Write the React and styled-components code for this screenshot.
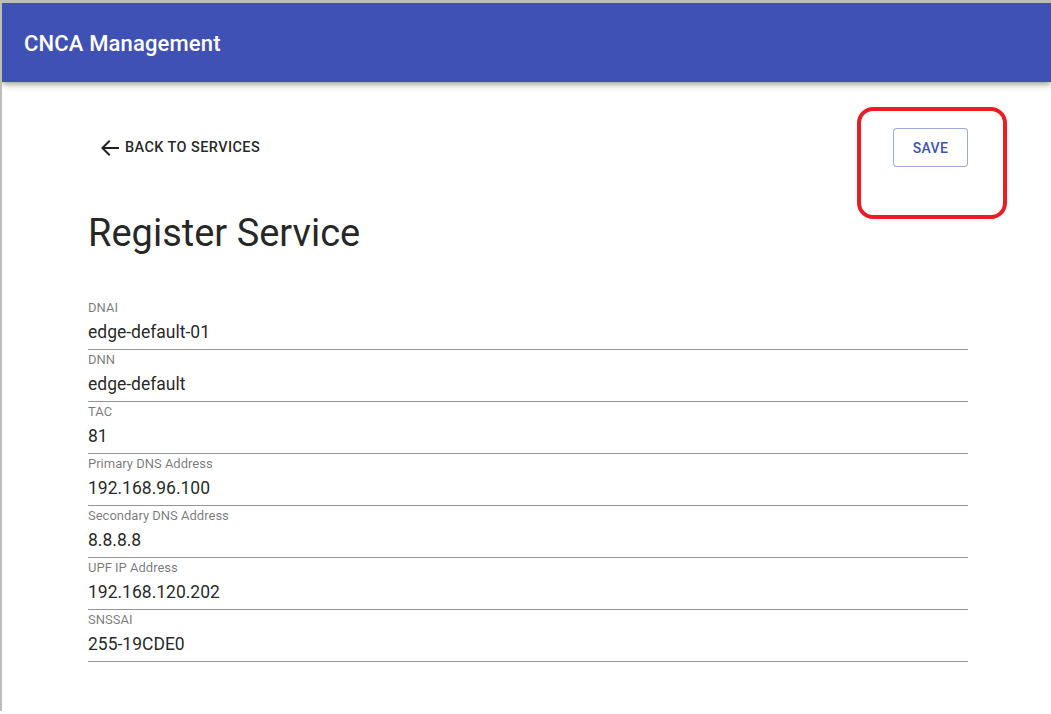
import React from "react";
import styled, { createGlobalStyle } from "styled-components";

const Global = createGlobalStyle`
  html, body { margin: 0; padding: 0; background: #fff; }
  body {
    border-top: 3px solid #bdbdbd;
    border-left: 2px solid #bdbdbd;
    min-height: 711px;
    box-sizing: border-box;
    font-family: Roboto, "Helvetica Neue", Arial, sans-serif;
    color: rgba(0,0,0,0.87);
  }
`;

const AppBar = styled.header`
  height: 79px;
  background: #3f51b5;
  display: flex;
  align-items: center;
  padding-left: 22px;
  box-shadow: 0 2px 4px -1px rgba(0,0,0,0.2), 0 4px 5px 0 rgba(0,0,0,0.14), 0 1px 10px 0 rgba(0,0,0,0.12);
`;

const Title = styled.h1`
  margin: 0 0 -1px;
  color: #fff;
  font-size: 22px;
  font-weight: 500;
  letter-spacing: 0.15px;
`;

const Main = styled.main`
  width: 880px;
  margin-left: 86px;
  padding-top: 46px;
`;

const TopRow = styled.div`
  display: flex;
  justify-content: space-between;
  align-items: center;
  height: 39px;
`;

const BackButton = styled.button`
  display: flex;
  align-items: center;
  gap: 3px;
  background: none;
  border: none;
  padding: 0 0 0 10px;
  font-family: inherit;
  font-size: 14.5px;
  font-weight: 500;
  letter-spacing: 0.4px;
  text-transform: uppercase;
  color: rgba(0,0,0,0.87);
  cursor: pointer;
`;

const SaveWrap = styled.div`
  position: relative;
`;

const SaveButton = styled.button`
  display: block;
  width: 75px;
  height: 39px;
  border: 1px solid rgba(63,81,181,0.5);
  border-radius: 4px;
  background: #fff;
  color: #3f51b5;
  font-family: inherit;
  font-size: 14px;
  font-weight: 500;
  letter-spacing: 0.4px;
  text-transform: uppercase;
  cursor: pointer;
`;

const Highlight = styled.div`
  position: absolute;
  left: -36px;
  top: -21px;
  width: 150px;
  height: 112px;
  box-sizing: border-box;
  border: 4px solid #ed1c24;
  border-radius: 16px;
  pointer-events: none;
`;

const Heading = styled.h2`
  margin: 44px 0 0;
  font-size: 38px;
  font-weight: 400;
  line-height: 44px;
  color: rgba(0,0,0,0.87);
`;

const Form = styled.div`
  margin-top: 43px;
  display: flex;
  flex-direction: column;
`;

const Field = styled.div`
  height: 51px;
  border-bottom: 1px solid rgba(0,0,0,0.42);
  display: flex;
  flex-direction: column;
`;

const Label = styled.label`
  font-size: 13px;
  line-height: 15px;
  margin-top: 2px;
  color: rgba(0,0,0,0.54);
`;

const Value = styled.div`
  font-size: 17.5px;
  line-height: 20px;
  margin-top: 7px;
  color: rgba(0,0,0,0.87);
`;

const fields = [
  ["DNAI", "edge-default-01"],
  ["DNN", "edge-default"],
  ["TAC", "81"],
  ["Primary DNS Address", "192.168.96.100"],
  ["Secondary DNS Address", "8.8.8.8"],
  ["UPF IP Address", "192.168.120.202"],
  ["SNSSAI", "255-19CDE0"],
];

export default function App() {
  return (
    <>
      <Global />
      <AppBar>
        <Title>CNCA Management</Title>
      </AppBar>
      <Main>
        <TopRow>
          <BackButton>
            <svg width="24" height="24" viewBox="2 0 22 24" fill="currentColor">
              <path d="M22 11H7.83l5.59-5.59L12 4l-8 8 8 8 1.41-1.41L7.83 13H22v-2z" />
            </svg>
            Back to Services
          </BackButton>
          <SaveWrap>
            <SaveButton>Save</SaveButton>
            <Highlight />
          </SaveWrap>
        </TopRow>
        <Heading>Register Service</Heading>
        <Form>
          {fields.map(([l, v]) => (
            <Field key={l}>
              <Label>{l}</Label>
              <Value>{v}</Value>
            </Field>
          ))}
        </Form>
      </Main>
    </>
  );
}
